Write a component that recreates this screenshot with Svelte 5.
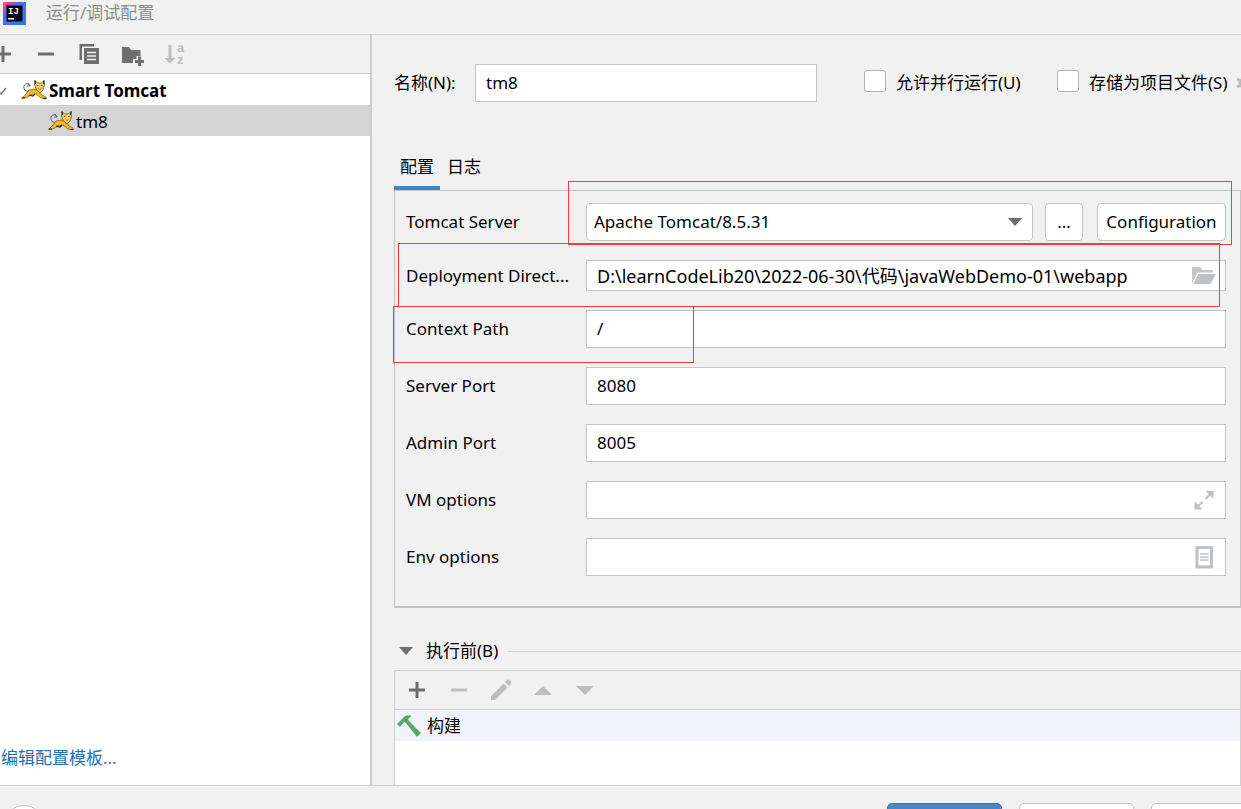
<script>
    let name = 'tm8'
    let parallel = false
    let storeAsFile = false
    let server = 'Apache Tomcat/8.5.31'

    const fields = [
        {id: 'context', label: 'Context Path', value: '/'},
        {id: 'port', label: 'Server Port', value: '8080'},
        {id: 'admin', label: 'Admin Port', value: '8005'},
        {id: 'vm', label: 'VM options', value: '', icon: 'expand'},
        {id: 'env', label: 'Env options', value: '', icon: 'list'}
    ]
</script>

{#snippet cat()}
    <svg class="cat" width="26" height="20" viewBox="0 0 26 20" aria-hidden="true">
        <path d="M9 12C5 12 2 9 3 6C4 3 8 3 9 6M7 3L9 6L6 6" fill="none" stroke="#555" stroke-width="0.9"/>
        <path d="M1 18L5 14L8 10L14 9L18 11L21 15L25 17V19L20 18L15 14L10 15L5 18Z" fill="#f5b921" stroke="#6b5520" stroke-width="0.7"/>
        <path d="M14 0.500L16.500 3H20.500L23 0.500L23.500 5L22 10L19 13L15.500 10L13.500 5Z" fill="#f7ce5e" stroke="#6b5520" stroke-width="0.8"/>
        <path d="M14 0.500L14.500 4M23 0.500L22.500 4M0.500 18H4M22 18.500H25.500M8 15L12 16L14 14" fill="none" stroke="#222" stroke-width="1.200"/>
        <path d="M16 5.500H17.500M20 5.500H21.500M18 8.500L19 9.500L20 8.500" fill="none" stroke="#5b4a20" stroke-width="0.9"/>
    </svg>
{/snippet}

<div class="dialog">
    <header>
        <svg width="23" height="23" viewBox="0 0 23 23" aria-hidden="true">
            <defs>
                <linearGradient id="logo" x1="0" y1="0" x2="1" y2="1">
                    <stop offset="0" stop-color="#fc6a4a"/>
                    <stop offset="0.15" stop-color="#e0457f"/>
                    <stop offset="0.36" stop-color="#4a6cf0"/>
                    <stop offset="1" stop-color="#1487f5"/>
                </linearGradient>
            </defs>
            <rect width="23" height="23" fill="url(#logo)"/>
            <rect x="3.500" y="3.500" width="16" height="16" fill="#0a0310"/>
            <text class="logo-text" x="5" y="12">IJ</text>
            <rect x="5" y="16" width="6" height="1.500" fill="#fff"/>
        </svg>
        <span>运行/调试配置</span>
    </header>

    <main>
        <aside>
            <div class="toolbar side">
                <button aria-label="Add"><svg viewBox="0 0 24 24"><path d="M12 4V20M4 12H20" stroke="#6e6e6e" stroke-width="3"/></svg></button>
                <button aria-label="Remove"><svg viewBox="0 0 24 24"><path d="M4 12H20" stroke="#6e6e6e" stroke-width="3"/></svg></button>
                <button aria-label="Copy">
                    <svg viewBox="0 0 24 24">
                        <path d="M2.500 18V2H17V4.500H5V18Z" fill="#6e6e6e"/>
                        <path d="M7 6H22V22H7Z" fill="#6e6e6e"/>
                        <path d="M10 10.500H19M10 14H19M10 17.500H19" stroke="#f1f1f1" stroke-width="1.500"/>
                    </svg>
                </button>
                <button aria-label="New folder">
                    <svg viewBox="0 0 24 24">
                        <path d="M2 5H9L11 8H20.500V14H16.500V17H13V21H2Z" fill="#6e6e6e"/>
                        <path d="M19.500 14.500V24M15 19.500H24" stroke="#6e6e6e" stroke-width="3"/>
                    </svg>
                </button>
                <button aria-label="Sort">
                    <svg viewBox="0 0 24 24">
                        <path d="M5.500 3H8.500V16H12.500L7 21.500L1.500 16H5.500Z" fill="#bdbdbd"/>
                        <text class="sort-text" x="14" y="10">a</text>
                        <text class="sort-text" x="14" y="22">z</text>
                    </svg>
                </button>
            </div>
            <div class="tree">
                <div class="node root">
                    <svg class="chevron" width="8" height="12" viewBox="0 0 8 12"><path d="M-3 5L1 9L6 3" fill="none" stroke="#777" stroke-width="1.500"/></svg>
                    {@render cat()}
                    <span>Smart Tomcat</span>
                </div>
                <div class="node child">
                    {@render cat()}
                    <span>tm8</span>
                </div>
            </div>
            <a href="#templates">编辑配置模板...</a>
        </aside>

        <section class="editor">
            <div class="name-row">
                <label for="name">名称(N):</label>
                <input id="name" class="text" type="text" bind:value={name}>
                <label class="check"><input type="checkbox" bind:checked={parallel}>允许并行运行(U)</label>
                <label class="check"><input type="checkbox" bind:checked={storeAsFile}>存储为项目文件(S)</label>
                <svg class="gear" width="16" height="16" viewBox="0 0 16 16" aria-hidden="true">
                    <circle cx="8" cy="8" r="4" fill="none" stroke="#bdbdbd" stroke-width="3"/>
                    <path d="M8 0V4M8 12V16M1 4L4.500 6M11.500 10L15 12M1 12L4.500 10M11.500 6L15 4" stroke="#bdbdbd" stroke-width="3"/>
                </svg>
            </div>

            <div class="tabs">
                <button class="active">配置</button>
                <button>日志</button>
            </div>

            <div class="panel">
                <div class="row">
                    <label for="server">Tomcat Server</label>
                    <div class="select">
                        <select id="server" bind:value={server}>
                            <option>Apache Tomcat/8.5.31</option>
                        </select>
                        <svg width="14" height="8" viewBox="0 0 14 8"><path d="M0 0H14L7 8Z" fill="#6e6e6e"/></svg>
                    </div>
                    <button class="btn more">...</button>
                    <button class="btn config">Configuration</button>
                </div>
                <div class="row">
                    <label for="deploy">Deployment Direct...</label>
                    <div class="field">
                        <input id="deploy" class="text short" type="text" value={'D:\\learnCodeLib20\\2022-06-30\\代码\\javaWebDemo-01\\webapp'}>
                        <svg viewBox="0 0 24 24">
                            <path d="M0 20V3H8L10.500 6H21V8.500H5.500Z" fill="#c3c7ca"/>
                            <path d="M6.500 10H24L18.500 20H1Z" fill="#bcc2c6"/>
                        </svg>
                    </div>
                </div>
                {#each fields as f}
                    <div class="row">
                        <label for={f.id}>{f.label}</label>
                        <div class="field">
                            <input id={f.id} class="text" type="text" value={f.value}>
                            {#if f.icon === 'expand'}
                                <svg viewBox="0 0 24 24">
                                    <path d="M13.500 3H21.500V11ZM2.500 13V21.500H10.500Z" fill="#bcc2c6"/>
                                    <path d="M13.500 11L19 5.500M10.500 14L5 19" stroke="#bcc2c6" stroke-width="2"/>
                                </svg>
                            {:else if f.icon === 'list'}
                                <svg viewBox="0 0 24 24">
                                    <path d="M5 2.500H19.500V22H5Z" fill="#fff" stroke="#bcc2c6" stroke-width="3"/>
                                    <path d="M8 9H16.500M8 12H16.500M8 15H16.500" stroke="#bcc2c6" stroke-width="1.400"/>
                                </svg>
                            {/if}
                        </div>
                    </div>
                {/each}
                <div class="mark mark-server"></div>
                <div class="mark mark-deploy"></div>
                <div class="mark mark-context"></div>
            </div>

            <div class="before">
                <svg width="14" height="8" viewBox="0 0 14 8"><path d="M0 0H14L7 8Z" fill="#6e6e6e"/></svg>
                <span>执行前(B)</span>
                <hr>
            </div>
            <div class="tasks">
                <div class="toolbar">
                    <button aria-label="Add task"><svg viewBox="0 0 24 24"><path d="M12 4V20M4 12H20" stroke="#6e6e6e" stroke-width="3"/></svg></button>
                    <button aria-label="Remove task" disabled><svg viewBox="0 0 24 24"><path d="M4 12H20" stroke="#bdbdbd" stroke-width="3"/></svg></button>
                    <button aria-label="Edit task" disabled>
                        <svg viewBox="0 0 24 24"><path d="M2 18L14.500 5.500L18.500 9.500L6 22H2ZM16 4L18 2Q19.500 1 21 2.500Q23 4.500 22 6L20 8Z" fill="#bdbdbd"/></svg>
                    </button>
                    <button aria-label="Move up" disabled><svg viewBox="0 0 24 24"><path d="M3 17H21L12 8Z" fill="#bdbdbd"/></svg></button>
                    <button aria-label="Move down" disabled><svg viewBox="0 0 24 24"><path d="M3 8H21L12 17Z" fill="#bdbdbd"/></svg></button>
                </div>
                <div class="task">
                    <svg width="24" height="24" viewBox="0 0 24 24" aria-hidden="true">
                        <path d="M0 10L8 2Q10 1 14 1.500L14 2.500L11 5L12 7L24 19L20 23L9 9L7 8L3 13Z" fill="#59a869"/>
                    </svg>
                    <span>构建</span>
                </div>
            </div>
        </section>
    </main>

    <footer>
        <button class="help" aria-label="Help"></button>
        <button class="action primary" aria-label="OK"></button>
        <button class="action" aria-label="Cancel"></button>
        <button class="action" aria-label="Apply"></button>
    </footer>
</div>

<style>
    :global(body) {
        margin: 0;
        overflow: hidden;
    }

    .dialog, .dialog * {
        box-sizing: border-box;
    }

    .dialog {
        display: flex;
        flex-direction: column;
        height: 100vh;
        background: #f1f1f1;
        color: #000;
        font: 17px/24px "Noto Sans", "Noto Sans CJK SC", sans-serif;
        white-space: nowrap;
    }

    button, input, select {
        font: inherit;
        color: inherit;
    }

    button {
        padding: 0;
        border: none;
        background: none;
    }

    header {
        display: flex;
        align-items: center;
        gap: 20px;
        height: 35px;
        padding: 0 3px 8px;
        border-bottom: 1px solid #d0d0d0;
        color: #8c8c8c;
    }

    .logo-text {
        font: bold 9px "Liberation Mono", monospace;
        fill: #fff;
    }

    main {
        display: flex;
        flex: 1;
        min-height: 0;
        border-bottom: 1px solid #cdcdcd;
    }

    aside {
        display: flex;
        flex-direction: column;
        width: 372px;
        border-right: 2px solid #cdcdcd;
        background: #fff;
        overflow: hidden;
    }

    aside a {
        margin-bottom: 15px;
        padding-left: 1px;
        color: #2470b3;
        text-decoration: none;
    }

    .toolbar {
        display: flex;
        align-items: center;
        gap: 18px;
        height: 39px;
        padding-left: 10px;
        border-bottom: 1px solid #d0d0d0;
        background: #f1f1f1;
    }

    .toolbar.side {
        gap: 19px;
        margin-left: -19px;
    }

    .toolbar button {
        width: 24px;
        height: 24px;
    }

    .toolbar svg {
        display: block;
        width: 24px;
        height: 24px;
        overflow: visible;
    }

    .sort-text {
        font: bold 13px/12px "Liberation Sans", sans-serif;
        fill: #bdbdbd;
    }

    .tree {
        flex: 1;
    }

    .node {
        display: flex;
        align-items: center;
        gap: 2px;
        height: 31px;
        padding-top: 2px;
    }

    .node .cat {
        margin-bottom: 2px;
    }

    .root {
        font-weight: bold;
    }

    .chevron {
        margin-right: 11px;
    }

    .child {
        padding-left: 48px;
        background: #d4d4d4;
    }

    .editor {
        display: flex;
        flex: 1;
        flex-direction: column;
        min-width: 0;
        padding-left: 22px;
    }

    .name-row {
        display: grid;
        grid-template-columns: 81px 1fr 193px 179px 5px;
        align-items: center;
        padding-top: 29px;
        overflow: hidden;
    }

    .name-row .text {
        width: calc(100% - 47px);
    }

    .text {
        width: 100%;
        height: 38px;
        padding: 0 10px 2px;
        border: 1px solid #c4c4c4;
        border-radius: 0;
        background: #fff;
        outline: none;
    }

    .short {
        height: 31px;
        font-size: 18px;
    }

    .check {
        display: flex;
        align-items: center;
        gap: 10px;
    }

    .check input {
        appearance: none;
        width: 22px;
        height: 22px;
        margin: 0 0 4px;
        border: 1px solid #b0b0b0;
        border-radius: 3px;
        background: #fff;
    }

    .tabs {
        display: flex;
        gap: 1px;
        height: 41px;
        margin-top: 48px;
    }

    .tabs button {
        padding: 0 6px 3px;
        border-bottom: 5px solid transparent;
    }

    .tabs .active {
        border-color: #4083c9;
    }

    .panel {
        position: relative;
        display: flex;
        flex-direction: column;
        gap: 19px;
        margin-top: -1px;
        padding: 12px 14px 30px 11px;
        border: 1px solid #c4c4c4;
        border-bottom-width: 2px;
    }

    .row {
        display: flex;
        align-items: center;
    }

    .row > label {
        flex: 0 0 180px;
    }

    .field, .select {
        position: relative;
        display: flex;
        flex: 1;
    }

    .field svg {
        position: absolute;
        top: calc(50% - 12px);
        right: 10px;
        width: 24px;
        height: 24px;
    }

    .select svg {
        position: absolute;
        top: calc(50% - 4px);
        right: 11px;
    }

    select, .btn {
        height: 38px;
        border: 1px solid #c4c4c4;
        border-radius: 4px;
        background: #fff;
    }

    select {
        appearance: none;
        width: 100%;
        padding: 0 7px;
    }

    .more {
        width: 38px;
        margin: 0 14px 0 12px;
    }

    .config {
        width: 129px;
    }

    .mark {
        position: absolute;
        border: 1px solid #f93a3a;
        pointer-events: none;
    }

    .mark-server {
        top: -10px;
        left: 173px;
        right: 8px;
        height: 64px;
    }

    .mark-deploy {
        top: 52px;
        left: 3px;
        right: 20px;
        height: 64px;
    }

    .mark-context {
        top: 115px;
        left: -2px;
        width: 301px;
        height: 57px;
    }

    .before {
        display: flex;
        align-items: center;
        height: 38px;
        margin-top: 24px;
        padding-left: 5px;
    }

    .before span {
        margin: 0 10px 0 13px;
    }

    .before hr {
        flex: 1;
        margin: 0;
        border: none;
        border-top: 1px solid #d0d0d0;
    }

    .tasks {
        flex: 1;
        border: 1px solid #d0d0d0;
        border-bottom: none;
        background: #fff;
    }

    .task {
        display: flex;
        align-items: center;
        gap: 6px;
        height: 31px;
        padding-left: 2px;
        background: #f0f4fa;
    }

    footer {
        display: flex;
        flex: 0 0 23px;
        align-items: flex-start;
        gap: 17px;
        padding: 17px 0 0 4px;
        overflow: hidden;
    }

    .help {
        width: 40px;
        height: 40px;
        margin: 2px auto 0 0;
        border: 1px solid #c4c4c4;
        border-radius: 50%;
        background: #fff;
    }

    .action {
        width: 115px;
        height: 38px;
        border: 1px solid #c4c4c4;
        border-radius: 5px;
        background: #fff;
    }

    .action:last-child {
        margin-right: -25px;
    }

    .primary {
        border-color: #3d75b3;
        background: #4a86c7;
    }
</style>
